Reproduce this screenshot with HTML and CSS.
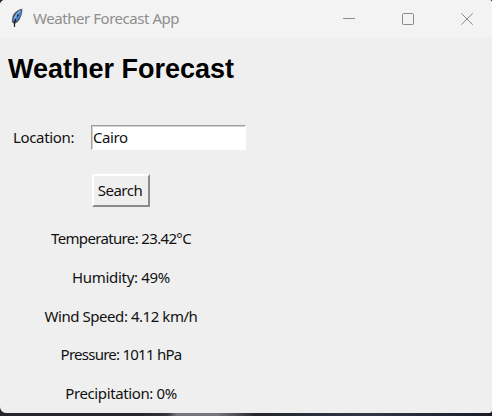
FILE: index.html
```html
<!DOCTYPE html>
<html lang="en">
<head>
<meta charset="utf-8">
<title>Weather Forecast App</title>
<link rel="stylesheet" href="styles.css">
</head>
<body>
<main class="window">
  <header class="titlebar">
    <svg class="feather" width="14" height="20" viewBox="0 0 14 20">
      <path d="M12.300.7C8.500 1.200 4 4 2.500 8.500L1.700 14l2 1.500L4.600 19l.6-3.500 2.600-1.500c2.600-3 5-8.500 4.500-13.300Z" fill="#555b63"/>
      <path d="M11.300 1.800C7.500 3.500 3.700 8 3 13l4-.6C9.700 9.500 11.800 6 11.300 1.800Z" fill="#4386d4"/>
      <path d="M10 3C7.500 5 5.500 7 4.500 10.500" fill="none" stroke="#86b5e8" stroke-width="1.300"/>
      <path d="M8.300 6.500 7.300 8.500M5.700 11 4.500 15V19" fill="none" stroke="#171b22" stroke-width="1.200"/>
    </svg>
    <span class="caption">Weather Forecast App</span>
    <div class="controls">
      <svg width="12" height="12" viewBox="0 0 12 12"><path d="M0 5.500h12"/></svg>
      <svg width="12" height="12" viewBox="0 0 12 12"><rect x=".5" y=".5" width="11" height="11" rx="1"/></svg>
      <svg width="12" height="12" viewBox="0 0 12 12"><path d="M.3.3l11.400 11.400M11.700.3.3 11.700"/></svg>
    </div>
  </header>
  <h1 class="heading">Weather Forecast</h1>
  <div class="form">
    <label class="label" for="location">Location:</label>
    <input class="entry" id="location" value="Cairo">
    <button class="search">Search</button>
  </div>
  <div class="results">
    <p class="result temperature">Temperature: 23.42°C</p>
    <p class="result humidity">Humidity: 49%</p>
    <p class="result wind">Wind Speed: 4.12 km/h</p>
    <p class="result pressure">Pressure: 1011 hPa</p>
    <p class="result precipitation">Precipitation: 0%</p>
  </div>
</main>
</body>
</html>
```
FILE: styles.css
```css
* { box-sizing: border-box; }
body {
  margin: 0;
  height: 416px;
  overflow: hidden;
  background: linear-gradient(90deg, #25262e 0 28%, #34353f 34%, #77767b 36%, #77767b 44%, #25262e 52%, #303745 75%, #191c26);
  font: 15px/20px "Noto Sans", sans-serif;
  letter-spacing: -0.500px;
  color: #111;
}
.window {
  height: 413px;
  background: #efefef;
  border-radius: 5px 3px 3px 6px;
  overflow: hidden;
}
.titlebar {
  display: flex;
  align-items: center;
  height: 38px;
  padding: 0 19px 0 10px;
  background: #f3f3f3;
  color: #8e8e8e;
}
.feather { margin-top: -3px; }
.caption {
  margin: -2px 0 0 9px;
  letter-spacing: -0.450px;
}
.controls { display: flex; gap: 47px; margin-left: auto; }
.controls svg { fill: none; stroke: #8b8b8b; }
.heading {
  margin: 15px 0 0 8px;
  font: bold 27px/32px "Liberation Sans", sans-serif;
  letter-spacing: 0;
  color: #000;
}
.form {
  display: grid;
  grid-template-columns: 78px 156px;
  row-gap: 24px;
  margin: 40px 0 0 13px;
  align-items: center;
}
.label { margin-top: -2px; letter-spacing: -0.350px; }
.entry {
  width: 155px;
  height: 25px;
  padding: 0 1px 2px 1px;
  border: 1px solid #fff;
  border-top-color: #a0a0a0;
  border-left-color: #a0a0a0;
  border-radius: 0;
  box-shadow: inset 1px 1px #d2d2d2;
  font: inherit;
  letter-spacing: -0.400px;
  color: inherit;
  outline: 0;
}
.search {
  grid-column: 2;
  width: 58px;
  height: 33px;
  margin-left: 1px;
  padding: 0 2px 2px 0;
  border: 2px solid #8b8b8b;
  border-top-color: #fff;
  border-left-color: #fff;
  background: #efefef;
  font: inherit;
  letter-spacing: -0.500px;
  color: inherit;
}
.results {
  display: grid;
  grid-auto-rows: 20px;
  row-gap: 18.800px;
  width: 242px;
  margin-top: 21px;
  text-align: center;
}
.result { margin: 0; white-space: nowrap; }
.temperature { letter-spacing: -0.650px; }
.humidity { letter-spacing: -0.300px; }
.wind { letter-spacing: -0.450px; }
.pressure { letter-spacing: -0.750px; }
.precipitation { letter-spacing: -0.380px; }
```
